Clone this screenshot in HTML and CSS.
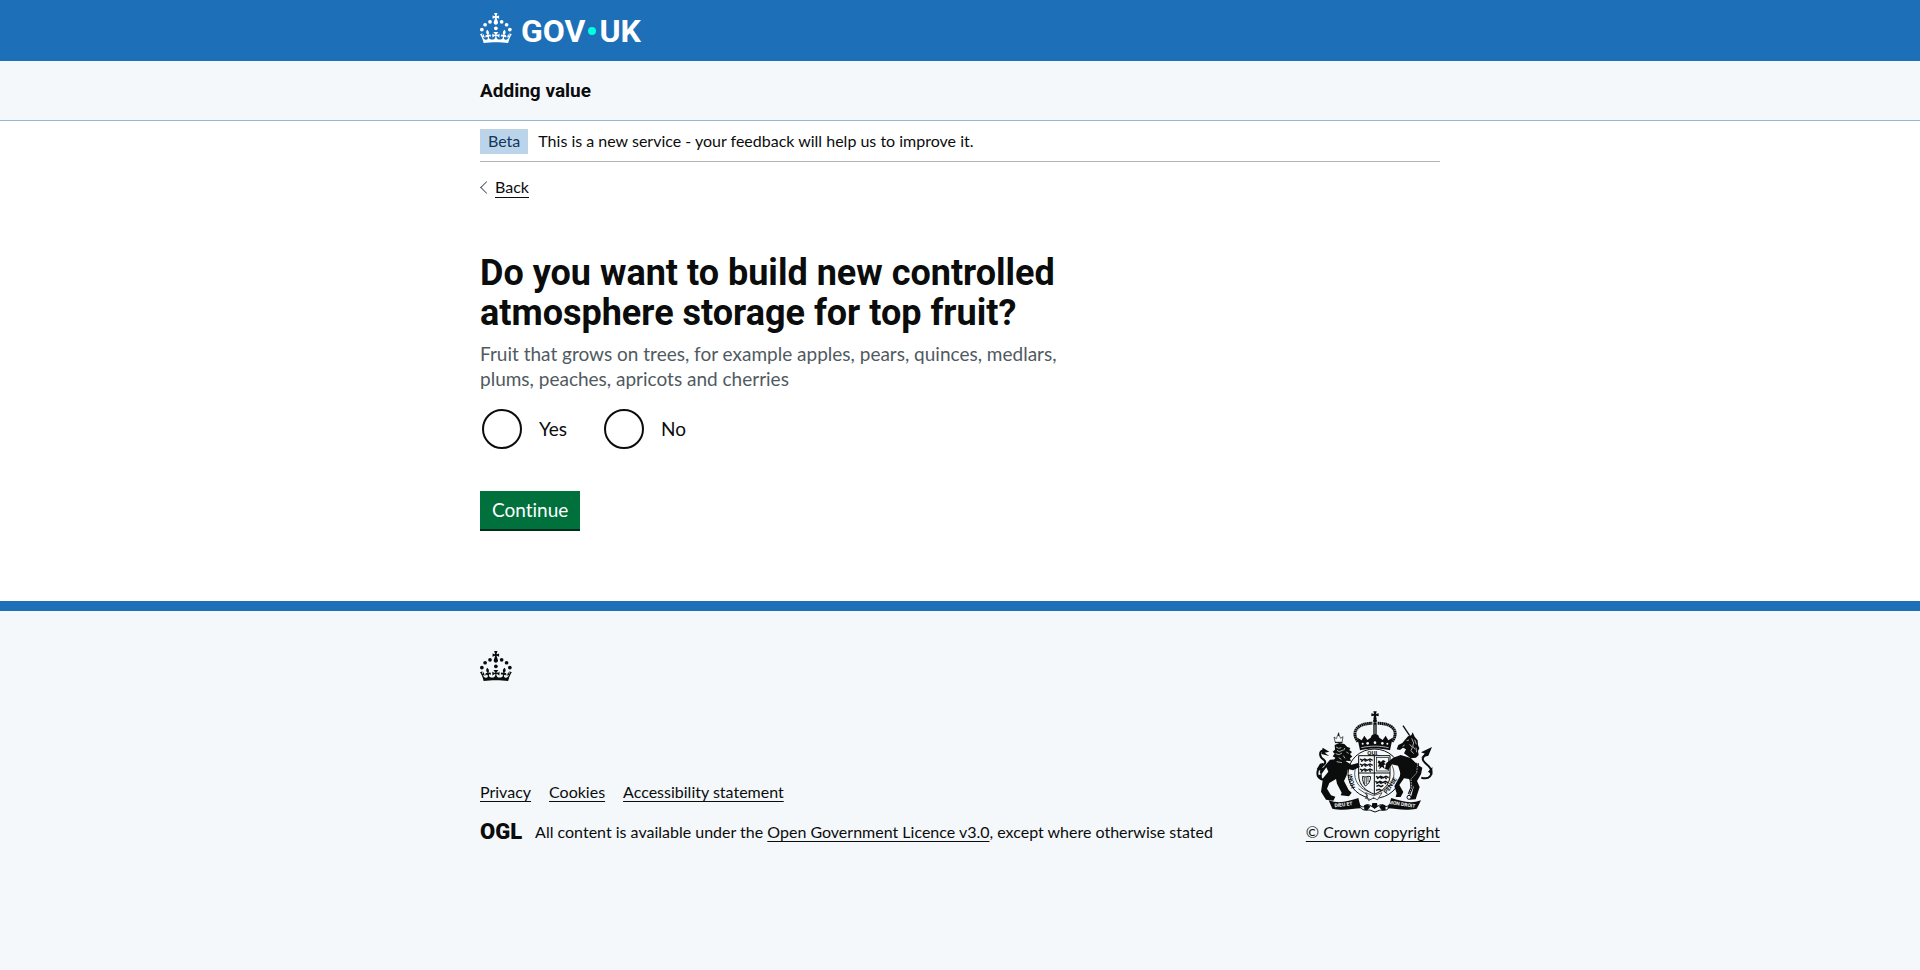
FILE: index.html
```html
<!DOCTYPE html>
<html lang="en">
<head>
<meta charset="utf-8">
<title>Adding value</title>
<meta name="viewport" content="width=device-width, initial-scale=1">
<link rel="stylesheet" href="styles.css">
</head>
<body>
<svg class="sprite" aria-hidden="true">
  <symbol id="crown" viewBox="0 0 64 60">
    <circle cx="20" cy="17.6" r="3.7"/><circle cx="10.2" cy="23.5" r="3.7"/><circle cx="3.7" cy="33.2" r="3.7"/>
    <circle cx="31.7" cy="30.6" r="3.7"/><circle cx="43.3" cy="17.6" r="3.7"/><circle cx="53.2" cy="23.5" r="3.7"/><circle cx="59.7" cy="33.2" r="3.7"/>
    <path d="M33.1,9.8c.2-.1.3-.3.5-.5l4.6,2.4v-6.8l-4.6,1.5c-.1-.2-.3-.3-.5-.5l1.9-5.9h-6.7l1.9,5.9c-.2.1-.3.3-.5.5l-4.6-1.5v6.8l4.6-2.4c.1.2.3.3.5.5l-2.6,8c-.9,2.8,1.2,5.7,4.1,5.7h0c3,0,5.1-2.9,4.1-5.7l-2.6-8ZM37,37.9s-3.4,3.8-4.1,6.1c2.2,0,4.2-.5,6.4-2.8l-.7,8.5c-2-2.8-4.4-4.1-5.7-3.8.1,3.1.5,6.7,5.8,7.2,3.7.3,6.7-1.5,7-3.8.4-2.6-2-4.3-3.7-1.6-1.4-4.5,2.4-6.1,4.9-3.2-1.9-4.5-1.8-7.7,2.4-10.9,3,4,2.6,7.3-1.2,11.1,2.4-1.3,6.2,0,4,4.6-1.2-2.8-3.7-2.2-4.2.2-.3,1.7.7,3.7,3,4.2,1.9.3,4.7-.9,7-5.9-1.3,0-2.4.7-3.9,1.7l2.4-8c.6,2.3,1.4,3.7,2.2,4.5.6-1.6.5-2.8,0-5.3l5,1.8c-2.6,3.6-5.2,8.7-7.3,17.5-7.4-1.1-15.7-1.7-24.5-1.7h0c-8.8,0-17.1.6-24.5,1.7-2.1-8.9-4.7-13.9-7.3-17.5l5-1.8c-.5,2.5-.6,3.7,0,5.3.8-.8,1.6-2.3,2.2-4.5l2.4,8c-1.5-1-2.6-1.7-3.9-1.7,2.3,5,5.2,6.2,7,5.9,2.3-.4,3.3-2.4,3-4.2-.5-2.4-3-3.1-4.2-.2-2.2-4.6,1.6-6,4-4.6-3.7-3.7-4.2-7.1-1.2-11.1,4.2,3.2,4.3,6.4,2.4,10.9,2.5-2.8,6.3-1.3,4.9,3.2-1.8-2.7-4.1-1-3.7,1.6.3,2.3,3.3,4.1,7,3.8,5.4-.5,5.7-4.2,5.8-7.2-1.3-.2-3.7,1-5.7,3.8l-.7-8.5c2.2,2.3,4.2,2.7,6.4,2.8-.7-2.3-4.1-6.1-4.1-6.1h10.6,0Z"/>
  </symbol>
</svg>

<header class="header">
  <div class="container">
    <a class="logo" href="#" aria-label="GOV.UK">
      <svg class="crown"><use href="#crown"/></svg>
      <span class="wordmark"><span>GOV</span><span class="dot"></span><span>UK</span></span>
    </a>
  </div>
</header>

<section class="service" aria-label="Service information">
  <div class="container"><a class="service-name" href="#">Adding value</a></div>
</section>

<div class="container page">
  <div class="phase">
    <strong class="tag">Beta</strong>
    <span>This is a new service - your feedback will help us to improve it.</span>
  </div>
  <a class="back" href="#"><span class="back-text">Back</span></a>

  <main class="main">
    <form class="question">
      <fieldset class="fieldset" aria-describedby="hint">
        <legend class="legend"><h1 class="title">Do you want to build new controlled atmosphere storage for top fruit?</h1></legend>
        <p class="hint" id="hint">Fruit that grows on trees, for example apples, pears, quinces, medlars, plums, peaches, apricots and cherries</p>
        <div class="radios">
          <div class="radio"><input type="radio" class="radio-input" id="yes" name="storage"><label for="yes">Yes</label></div>
          <div class="radio"><input type="radio" class="radio-input" id="no" name="storage"><label for="no">No</label></div>
        </div>
      </fieldset>
      <button class="button" type="button">Continue</button>
    </form>
  </main>
</div>

<footer class="footer">
  <div class="container">
    <svg class="crown" aria-hidden="true"><use href="#crown"/></svg>
    <div class="footer-row">
      <div class="footer-meta">
        <ul class="links">
          <li><a href="#">Privacy</a></li>
          <li><a href="#">Cookies</a></li>
          <li><a href="#">Accessibility statement</a></li>
        </ul>
        <div class="licence">
          <span class="ogl">OGL</span>
          <span>All content is available under the <a href="#">Open Government Licence v3.0</a>, except where otherwise stated</span>
        </div>
      </div>
      <a class="copyright" href="#">
        <svg class="arms" viewBox="38 32 375 306" aria-hidden="true">
          <!-- royal crown -->
          <path d="M222 33h10l-2 8 8-2v9l-8-2 2 10h-10l2-10-8 2v-9l8 2z"/>
          <circle cx="227" cy="61" r="6"/>
          <path d="M176 124C152 92 178 68 219 69M278 124c24-32 0-56-43-55" fill="none" stroke="#0b0c0c" stroke-width="9" stroke-dasharray="5 1"/>
          <path d="M222 67h10v40h-10z"/><path class="light-line" d="M227 73v28"/>
          <path d="M174 112l13 8 8-14 9 13 10-7 4-9h18l4 9 10 7 9-13 8 14 13-8-8 38c-30-7-60-7-90 0z"/>
          <g class="light"><circle cx="205" cy="129" r="4"/><circle cx="227" cy="127" r="4"/><circle cx="249" cy="129" r="4"/><circle cx="190" cy="130" r="3"/><circle cx="264" cy="130" r="3"/></g>
          <path class="light-line" d="M186 142c28-6 54-6 82 0"/>
          <!-- garter -->
          <ellipse cx="225" cy="220" rx="79" ry="74" fill="#f4f8fb" stroke="#0b0c0c" stroke-width="3"/>
          <ellipse cx="225" cy="220" rx="59" ry="56" fill="none" stroke="#0b0c0c" stroke-width="2"/>
          <text x="204" y="164" class="motto">QUI</text>
          <text x="0" y="0" class="motto" transform="translate(168 262) rotate(-105)">HONI</text>
          <text x="0" y="0" class="motto" transform="translate(262 282) rotate(-55)">PENSE</text>
          <!-- shield -->
          <path d="M178 166h94v58c0 34-25 48-47 58-22-10-47-24-47-58z" fill="#f4f8fb" stroke="#0b0c0c" stroke-width="3"/>
          <path d="M225 166v116M178 218h94" stroke="#0b0c0c" stroke-width="3"/>
          <g fill="none" stroke="#0b0c0c" stroke-width="4"><path id="beast" d="M182 176l7 4 7-4 8 4 8-4 8 4M185 183l6-3M201 183l-6-3M214 184l-4-4"/><use href="#beast" y="15"/><use href="#beast" y="30"/><use href="#beast" x="48" y="52"/><use href="#beast" x="46" y="67"/><path d="M231 258l7-3 7 4 7-4M230 270l9-3 7 3"/></g>
          <rect x="231" y="172" width="36" height="40" fill="none" stroke="#0b0c0c" stroke-width="2"/>
          <path d="M238 180l7 5 6-6 8 4-5 5 7 4-8 2 3 12-8-7-8 8 1-10-6 3 4-10-4-3z"/>
          <path d="M190 228c10 6 16-3 24 1-1 14-6 22-16 28-6-7-9-17-8-29z" fill="none" stroke="#0b0c0c" stroke-width="3"/>
          <path d="M196 231v21M201 231v20M206 230v15" stroke="#0b0c0c" stroke-width="2"/>
          <path d="M199 277l24 9 25-9-14 22-11-7-15 9z" fill="#f4f8fb" stroke="#0b0c0c" stroke-width="2"/>
          <path d="M177 265l28 19-7 10 18 4" fill="none" stroke="#0b0c0c" stroke-width="2"/>
          <!-- lion -->
          <path d="M108 127l-4-17 7 5 6-15 7 14 7-5-3 18z" fill="#f4f8fb" stroke="#0b0c0c" stroke-width="2"/><path d="M118 97v10M107 126h22" stroke="#0b0c0c" stroke-width="3"/>
          <path d="M106 134l14-6 15 3 9 9 9 3-3 6 8 6-6 6 7 8-7 5 3 9-13-2-9 8-21-2-8-8 4-7-8-4 6-8-6-6 7-6z"/>
          <path d="M92 178l28-2 22 8 14 9 20-5 5 12-20 10-15-4-4 19-8 17 14 27 9 8-8 11-25-3 3-8-14-27-3-14-20 12-7 17 12 20 13 4-6 12-22-3-15-24 6-40 16-20-6-13-16 22-4-8z"/>
          <path d="M72 238c-26-6-20-32-5-40 15-8 12-16 5-21-12-8-13-23-2-27" fill="none" stroke="#0b0c0c" stroke-width="6"/>
          <path d="M70 142l20 12-14 3 14 10-24-6zM52 207l10-17 11-3-4 16 12-2-14 12zM53 226l14-5 1 20z"/>
          <path class="light-line" d="M110 140l8 4 8-2M113 150l7 4 11-5M109 160l10 3 9-5M132 166l5 8M118 172l8 5M136 143l-3 8M141 155l7 4M112 184l16 3"/>
          <!-- unicorn -->
          <path d="M311 76l20 30" fill="none" stroke="#0b0c0c" stroke-width="4"/>
          <path d="M326 108l10-3 4-9 6 13 9 11 1 14 4 10-4 8 2 12-8 8-16 2-12-9-8-6 6-12-9-5-9 7-10-2 5-13 12-6z"/>
          <path class="light-line" d="M322 121l7-2M337 114l6 14-3 9 7 10M331 132l8 9-4 10 8 9M346 118l5 14M350 142l2 14M316 134l-6 4"/>
          <path d="M282 172l22-8 30 9 23 22 12 7-4 20-12 20 8 18-12 37-18 1 5-12 7-26-14-24-15-2-14 20 12 21-8 15-15 0 3-11-7-21 20-36-9-26-19-4-10 17-10-3 4-18z"/>
          <path d="M366 232c26 7 34-9 28-26-5-14-24-18-24-30 0-10 13-15 20-28" fill="none" stroke="#0b0c0c" stroke-width="6"/>
          <path d="M398 140l-11 26-22 6 12-12-12-4zM399 200l0 24-13-10z"/>
          <path d="M355 188l-3 30-17 18 2 26-8 20" fill="none" stroke="#0b0c0c" stroke-width="8"/>
          <path class="light-line" d="M355 188l-3 30-17 18 2 26-8 20" stroke-dasharray="5 3"/>
          <circle cx="329" cy="291" r="6" fill="#f4f8fb" stroke="#0b0c0c" stroke-width="3"/>
          <!-- compartment and scroll -->
          <path d="M88 300c32 12 60 2 89-7l8 31c-26 1-53 8-86 1l-4-9zM365 300c-32 12-60 2-89-7l-12 31c26 1 53 8 88 1l5-9z"/>
          <path d="M178 309c9 18 22 8 30 4l18 10 17-10c12 7 22 9 31-4M184 321c8 14 23 6 30 9l13 5 13-5c10-2 20 5 30-9" fill="none" stroke="#0b0c0c" stroke-width="3"/>
          <path d="M194 315l10-4 9 8-8 10h-10zM258 315l-10-4-9 8 8 10h12zM219 308h14l2 10-9 8-9-8z"/>
          <text x="0" y="0" class="scroll" transform="translate(106 321) rotate(-7)">DIEU ET</text>
          <text x="0" y="0" class="scroll" transform="translate(267 311) rotate(8)">MON DROIT</text>
        </svg>
        <span>© Crown copyright</span>
      </a>
    </div>
  </div>
</footer>
</body>
</html>
```

FILE: styles.css
```css
* { box-sizing: border-box; }
body {
  margin: 0;
  min-height: 100vh;
  display: flex;
  flex-direction: column;
  background: #fff;
  color: #0b0c0c;
  font: 16px/20px Lato, "Liberation Sans", sans-serif;
  font-variant-ligatures: none;
}
a {
  color: inherit;
  text-decoration: underline;
  text-decoration-thickness: 1px;
  text-underline-offset: 3px;
}
.sprite { display: none; }
.container { width: 100%; max-width: 1020px; margin: 0 auto; padding: 0 30px; }
.crown { display: block; width: 32px; height: 30px; fill: currentColor; }

.header { background: #1d70b8; color: #fff; padding: 13px 0 18px; }
.logo { display: flex; align-items: center; gap: 9px; height: 30px; width: max-content; text-decoration: none; }
.wordmark { display: flex; align-items: center; gap: 3px; padding-top: 6px; font: bold 32px/36px Roboto, "Liberation Sans", sans-serif; }
.dot { width: 8px; height: 8px; border-radius: 50%; background: #00ffe0; }

.service { background: #f4f8fb; border-bottom: 1px solid #8eb8dc; padding: 17px 0; }
.service-name { display: block; font-family: Roboto, "Liberation Sans", sans-serif; font-size: 19px; line-height: 25px; font-weight: bold; text-decoration: none; }

.phase { display: flex; align-items: flex-start; gap: 10px; padding: 8px 0 7px; border-bottom: 1px solid #b1b4b6; line-height: 24px; }
.tag { background: #bbd4ea; color: #0f385c; font-weight: normal; padding: 0 8px 1px; }
.back { display: flex; align-items: center; gap: 4px; width: max-content; margin-top: 15px; padding-left: 2px; text-decoration: none; }
.back::before {
  content: "";
  width: 8px;
  height: 8px;
  border-left: 1px solid #505a5f;
  border-bottom: 1px solid #505a5f;
  transform: rotate(45deg);
}
.back-text { border-bottom: 1px solid; }
.main { padding: 55px 0 70px; }
.question { max-width: 630px; }
.fieldset { border: 0; margin: 0 0 40px; padding: 0; min-width: 0; }
.legend { padding: 0; margin-bottom: 8px; }
.title { margin: 0; font-family: Roboto, "Liberation Sans", sans-serif; font-size: 36px; line-height: 40px; font-weight: bold; }
.hint { margin: 0 0 16px; max-width: 600px; color: #505a5f; font-size: 19px; line-height: 25px; }
.radios { display: flex; gap: 20px; font-size: 19px; line-height: 25px; }
.radio { display: flex; align-items: center; height: 44px; padding-left: 2px; }
.radio-input { appearance: none; width: 40px; height: 40px; margin: 0; border: 2px solid #0b0c0c; border-radius: 50%; background: #fff; }
.radio-input:checked { background: radial-gradient(#0b0c0c 10px, #fff 11px); }
.radio label { padding: 6px 15px 8px 17px; }
.button {
  display: block;
  border: 0;
  border-bottom: 2px solid #002d18;
  padding: 8px 12px;
  background: #00703c;
  color: #fff;
  font: 19px/22px Lato, "Liberation Sans", sans-serif;
  font-variant-ligatures: none;
}

.footer { flex: 1; background: #f4f8fb; border-top: 10px solid #1d70b8; padding: 40px 0 25px; }
.footer-row { display: flex; align-items: flex-end; justify-content: space-between; gap: 30px; padding-top: 30px; }
.footer-meta { display: flex; flex-direction: column; gap: 20px; }
.links { display: flex; gap: 18px; margin: 0; padding: 0; list-style: none; }
.licence { display: flex; align-items: center; gap: 13px; }
.ogl { font-family: Roboto, "Liberation Sans", sans-serif; font-size: 22px; line-height: 20px; font-weight: 900; }
.copyright { display: flex; flex-direction: column; align-items: flex-end; gap: 9px; }
.arms { display: block; width: 125px; height: 102px; margin-right: 3px; fill: #0b0c0c; }
.arms .light { fill: #f4f8fb; }
.arms .light-line { fill: none; stroke: #f4f8fb; stroke-width: 2px; }
.motto { font: bold 18px Roboto, sans-serif; }
.scroll { font: bold 15px Roboto, sans-serif; fill: #f4f8fb; }
```
